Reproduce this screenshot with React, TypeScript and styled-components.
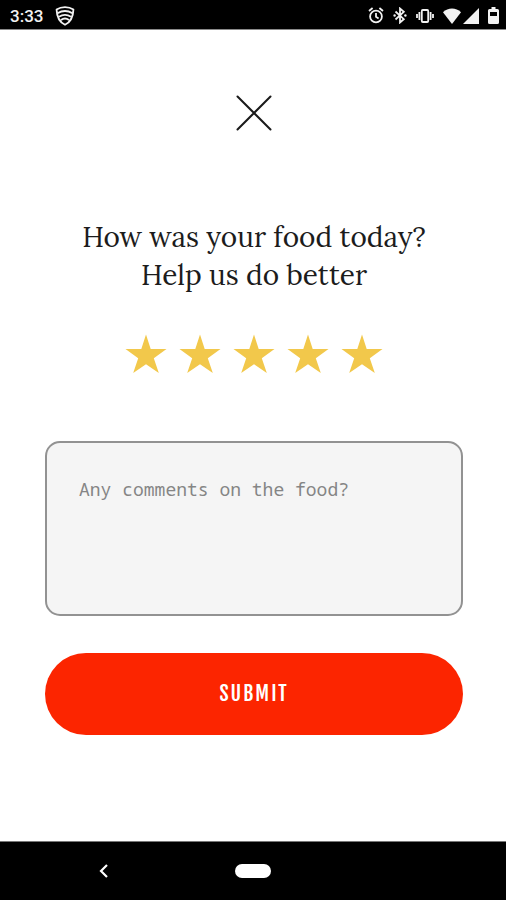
import React, { useState } from "react";
import styled, { createGlobalStyle } from "styled-components";

const GlobalStyle = createGlobalStyle`
  *,
  *::before,
  *::after {
    box-sizing: border-box;
  }

  body {
    margin: 0;
    background-color: #fff;
  }
`;

const Screen = styled.div`
  display: flex;
  flex-direction: column;
  min-height: 100vh;
  background-color: #fff;
`;

const StatusBar = styled.header`
  display: flex;
  align-items: center;
  justify-content: space-between;
  height: 30px;
  padding: 2px 7px 0 10px;
  background-color: #000;
  border-bottom: 1px solid #8a8a8a;
  color: #f2f2f2;
`;

const StatusGroup = styled.div<{ $gap: number }>`
  display: flex;
  align-items: center;
  gap: ${({ $gap }) => $gap}px;

  svg {
    display: block;
  }
`;

const Clock = styled.time`
  font-family: Roboto, "Liberation Sans", sans-serif;
  font-size: 17px;
  font-weight: 500;
  line-height: 20px;
`;

const FeedbackForm = styled.form`
  flex: 1;
  display: flex;
  flex-direction: column;
  align-items: center;
  padding: 61px 43px 40px 45px;
`;

const CloseButton = styled.button`
  padding: 4px;
  border: none;
  background-color: transparent;
  cursor: pointer;

  svg {
    display: block;
  }
`;

const Title = styled.h1`
  margin: 83px 0 0;
  color: #1c1c1c;
  font-family: Lora, "Liberation Serif", serif;
  font-size: 28px;
  font-weight: 400;
  line-height: 38px;
  text-align: center;
`;

const Rating = styled.fieldset`
  display: flex;
  gap: 12px;
  margin: 40px 0 0;
  padding: 0;
  border: none;
`;

const StarLabel = styled.label<{ $filled: boolean }>`
  position: relative;
  color: ${({ $filled }) => ($filled ? "#f2c84b" : "#dedede")};
  cursor: pointer;

  svg {
    display: block;
  }
`;

const StarInput = styled.input`
  position: absolute;
  inset: 0;
  width: 100%;
  height: 100%;
  margin: 0;
  opacity: 0;
  cursor: pointer;
`;

const Comments = styled.textarea`
  display: block;
  width: 100%;
  height: 175px;
  margin-top: 67px;
  padding: 34px 32px;
  border: 2px solid #929292;
  border-radius: 15px;
  background-color: #f5f5f5;
  color: #333;
  font-family: "Droid Sans Mono", "Noto Sans Mono", "DejaVu Sans Mono", monospace;
  font-size: 18px;
  line-height: 24px;
  resize: none;

  &::placeholder {
    color: #858585;
    opacity: 1;
  }
`;

const SubmitButton = styled.button`
  width: 100%;
  height: 82px;
  margin-top: 37px;
  padding: 0 0 2px;
  border: none;
  border-radius: 41px;
  background-color: #fc2500;
  color: #fff;
  font-family: "Fjalla One", "Bebas Neue", Oswald, "Roboto Condensed", "Liberation Sans", sans-serif;
  font-size: 20px;
  font-weight: 500;
  letter-spacing: 2px;
  cursor: pointer;
`;

const NavBar = styled.nav`
  display: grid;
  grid-template-columns: 1fr 92px 1fr;
  align-items: center;
  justify-items: center;
  height: 59px;
  border-top: 1px solid #777;
  background-color: #000;
`;

const NavButton = styled.button`
  padding: 8px;
  border: none;
  background-color: transparent;
  color: #fff;

  svg {
    display: block;
  }
`;

const HomePill = styled.span`
  display: block;
  width: 36px;
  height: 14px;
  border-radius: 7px;
  background-color: #fff;
`;

const ShieldIcon = () => (
  <svg width="20" height="20" viewBox="0 0 20 20" fill="none" stroke="currentColor" strokeWidth="1.8">
    <path d="M10 1.2C7.2 1.2 4 2 1.6 3.6C1.8 10.5 4.4 16 10 18.8C15.6 16 18.2 10.5 18.4 3.6C16 2 12.8 1.2 10 1.2Z" />
    <path d="M2.5 7.2Q10 2.8 17.5 7.2M4 10.8Q10 6.8 16 10.8M6 14Q10 11 14 14" />
  </svg>
);

const AlarmIcon = () => (
  <svg width="16" height="17" viewBox="0 0 16 17" fill="none" stroke="currentColor" strokeWidth="1.8">
    <circle cx="8" cy="9.5" r="5.9" />
    <path d="M8 6V9.8L10.6 11.4M1 4L4.6 1M15 4L11.4 1" />
  </svg>
);

const BluetoothIcon = () => (
  <svg width="14" height="17" viewBox="0 0 14 17" fill="currentColor">
    <path
      d="M2.5 4.5L10.8 12.2L7 15.5V1.5L10.8 4.8L2.5 12.5"
      fill="none"
      stroke="currentColor"
      strokeWidth="1.8"
    />
    <circle cx="1.6" cy="8.5" r="1.2" />
    <circle cx="12.4" cy="8.5" r="1.2" />
  </svg>
);

const VibrateIcon = () => (
  <svg width="18" height="14" viewBox="0 0 18 14" fill="none" stroke="currentColor" strokeWidth="1.8">
    <rect x="5.8" y="1" width="6.4" height="12" rx="1" />
    <path d="M3.4 3V11M1 5V9M14.6 3V11M17 5V9" />
  </svg>
);

const WifiIcon = () => (
  <svg width="18" height="16" viewBox="0 0 18 16" fill="currentColor">
    <path d="M9 16L0 4.2C5 -0.6 13 -0.6 18 4.2Z" />
  </svg>
);

const SignalIcon = () => (
  <svg width="16" height="16" viewBox="0 0 16 16" fill="currentColor">
    <path d="M16 0V16H0Z" />
  </svg>
);

const BatteryIcon = () => (
  <svg width="11" height="17" viewBox="0 0 11 17" fill="currentColor" fillRule="evenodd">
    <path d="M3.5 0H7.5V2H9.5Q11 2 11 3.5V15.5Q11 17 9.5 17H1.5Q0 17 0 15.5V3.5Q0 2 1.5 2H3.5ZM2 5V9H9V5Z" />
  </svg>
);

const CloseIcon = () => (
  <svg width="36" height="36" viewBox="0 0 36 36" stroke="#1a1a1a" strokeWidth="2" strokeLinecap="round">
    <path d="M1.5 1.5L34.5 34.5M34.5 1.5L1.5 34.5" />
  </svg>
);

const StarIcon = () => (
  <svg width="42" height="40" viewBox="0 0 42 40" fill="currentColor">
    <path d="M21 0.5L25.7 15H41.5L28.8 24.3L33.8 39L21 30.2L8.2 39L13.2 24.3L0.5 15H16.3Z" />
  </svg>
);

const BackIcon = () => (
  <svg width="10" height="14" viewBox="0 0 10 14" fill="none" stroke="currentColor" strokeWidth="2.2">
    <path d="M8 1L2 7L8 13" />
  </svg>
);

const STARS = [1, 2, 3, 4, 5];

const App: React.FC = () => {
  const [rating, setRating] = useState(5);
  const [comments, setComments] = useState("");

  const handleSubmit = (e: React.FormEvent) => {
    e.preventDefault();
  };

  return (
    <Screen>
      <GlobalStyle />
      <StatusBar>
        <StatusGroup $gap={12}>
          <Clock>3:33</Clock>
          <ShieldIcon />
        </StatusGroup>
        <StatusGroup $gap={9}>
          <AlarmIcon />
          <BluetoothIcon />
          <VibrateIcon />
          <StatusGroup $gap={2}>
            <WifiIcon />
            <SignalIcon />
          </StatusGroup>
          <BatteryIcon />
        </StatusGroup>
      </StatusBar>

      <FeedbackForm onSubmit={handleSubmit}>
        <CloseButton type="button" aria-label="Close">
          <CloseIcon />
        </CloseButton>

        <Title>
          How was your food today?
          <br />
          Help us do better
        </Title>

        <Rating aria-label="Rating">
          {STARS.map((value) => (
            <StarLabel key={value} $filled={value <= rating}>
              <StarInput
                type="radio"
                name="rating"
                value={value}
                aria-label={`${value} stars`}
                checked={rating === value}
                onChange={() => setRating(value)}
              />
              <StarIcon />
            </StarLabel>
          ))}
        </Rating>

        <Comments
          aria-label="Comments"
          placeholder="Any comments on the food?"
          value={comments}
          onChange={(e) => setComments(e.target.value)}
        />

        <SubmitButton type="submit">SUBMIT</SubmitButton>
      </FeedbackForm>

      <NavBar>
        <NavButton type="button" aria-label="Back">
          <BackIcon />
        </NavButton>
        <NavButton type="button" aria-label="Home">
          <HomePill />
        </NavButton>
      </NavBar>
    </Screen>
  );
};

export default App;
